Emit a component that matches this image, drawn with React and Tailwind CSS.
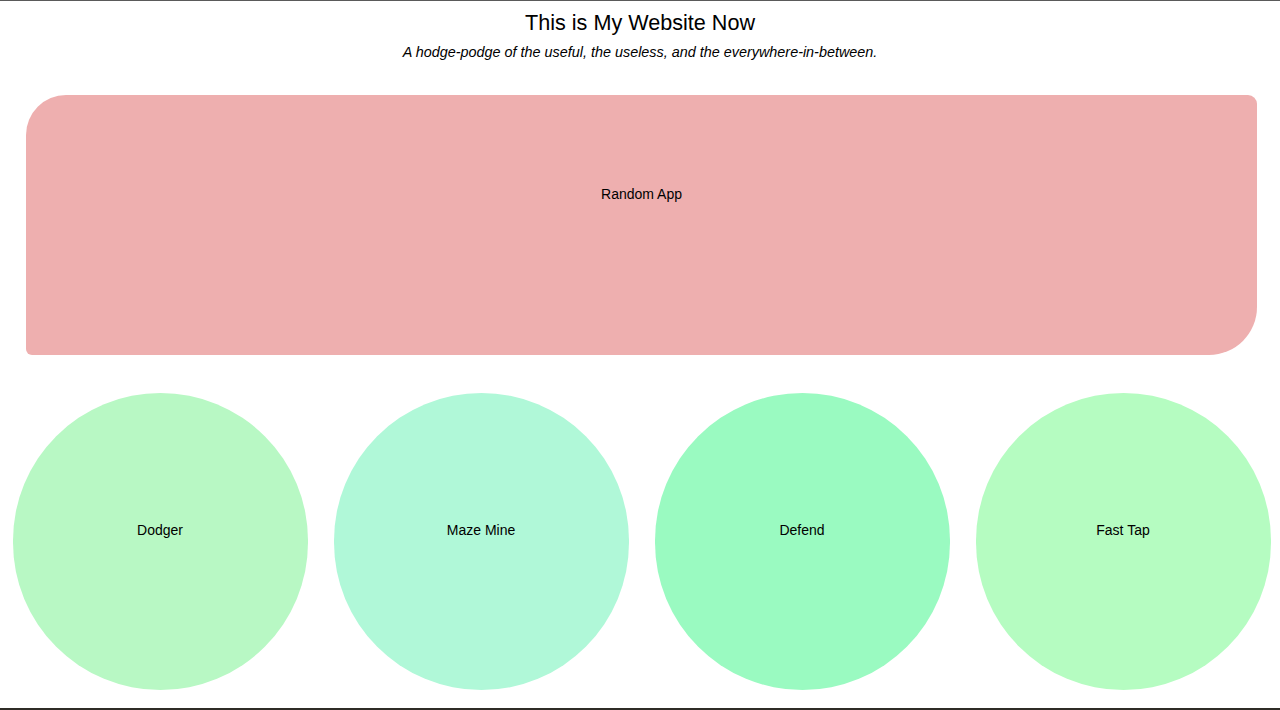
const games = [
  { name: 'Dodger', color: 'bg-[#b8f8c4]' },
  { name: 'Maze Mine', color: 'bg-[#b0f8d8]' },
  { name: 'Defend', color: 'bg-[#9afac1]' },
  { name: 'Fast Tap', color: 'bg-[#b5fcc1]' },
];

const App = () => {
  return (
    <div className="h-[710px] bg-white border-t border-[#5a5a5a] border-b-2 border-b-[#2f2c26] font-['Liberation_Sans',Arial,sans-serif] text-black overflow-hidden">
      <header className="pt-[9px] text-center">
        <h1 className="text-[21.6px] leading-[26px]">This is My Website Now</h1>
        <p className="mt-[7px] text-[14.4px] leading-[18px] italic">
          A hodge-podge of the useful, the useless, and the everywhere-in-between.
        </p>
      </header>

      <a href="#" className="ml-[26px] mr-[23px] mt-[34px] block h-[260px] bg-[#eeafaf] rounded-tl-[40px] rounded-tr-[9px] rounded-br-[48px] rounded-bl-[6px] pt-[90px] text-center text-[14px] leading-[18px]">
        Random App
      </a>

      <div className="mt-[38px] flex gap-[26px] pl-[12.5px]">
        {games.map((g) => (
          <a key={g.name} href="#"
            className={`${g.color} block w-[295px] h-[297px] shrink-0 rounded-full pt-[128px] text-center text-[14px] leading-[18px]`}>
            {g.name}
          </a>
        ))}
      </div>
    </div>
  );
};

export default App;
